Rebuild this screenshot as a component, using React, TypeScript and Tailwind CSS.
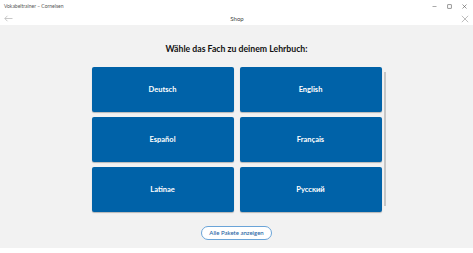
import React from 'react';

const subjects = ['Deutsch', 'English', 'Español', 'Français', 'Latinae', 'Русский'];

const App: React.FC = () => {
	return (
		<div className="w-[473px] h-[253px] bg-white flex flex-col overflow-hidden" style={{ fontFamily: 'Lato, "Noto Sans", sans-serif' }}>
			{/* window title bar */}
			<div className="h-[12px] flex items-center justify-between pl-[4px] pr-[6px]">
				<span className="text-[5px] leading-none text-[#555]">Vokabeltrainer – Cornelsen</span>
				<div className="flex items-center gap-[10px] text-[#555]">
					<svg width="5" height="5" viewBox="0 0 10 10"><path d="M1 5h8" stroke="currentColor" strokeWidth="1" /></svg>
					<svg width="5" height="5" viewBox="0 0 10 10"><rect x="1.5" y="1.5" width="7" height="7" fill="none" stroke="currentColor" strokeWidth="1.2" /></svg>
					<svg width="5" height="5" viewBox="0 0 10 10"><path d="M1 1l8 8M9 1l-8 8" stroke="currentColor" strokeWidth="1.2" /></svg>
				</div>
			</div>
			{/* app header */}
			<div className="h-[13px] flex items-center justify-between px-[4px]">
				<svg width="9" height="7" viewBox="0 0 18 14" className="text-[#aaa]">
					<path d="M17 7H2M7 1.5L1.5 7 7 12.5" fill="none" stroke="currentColor" strokeWidth="1.3" />
				</svg>
				<span className="text-[6px] leading-none text-[#444]">Shop</span>
				<svg width="8" height="8" viewBox="0 0 10 10" className="text-[#999]">
					<path d="M1 1l8 8M9 1l-8 8" stroke="currentColor" strokeWidth="0.8" />
				</svg>
			</div>
			{/* content */}
			<div className="flex-1 bg-[#f2f2f2] flex flex-col items-center">
				<div className="mt-[18px] text-[8.7px] leading-[12px] font-bold text-[#111]">
					Wähle das Fach zu deinem Lehrbuch:
				</div>
				<div className="relative mt-[12px]">
					<div className="grid grid-cols-[142px_142px] auto-rows-[45px] gap-x-[6px] gap-y-[5px]">
						{subjects.map((s) => (
							<button
								key={s}
								className="rounded-[2px] bg-[#0062a8] shadow-[0_1px_1px_rgba(0,0,0,0.25)] flex items-center justify-center text-white text-[7.5px] font-bold"
							>
								{s}
							</button>
						))}
					</div>
					<div className="absolute right-[-4px] top-[5px] w-[2px] h-[134px] bg-[#c6c6c6]" />
				</div>
				<button className="mt-[14px] h-[14px] px-[7px] rounded-full border border-[#6aa4d8] bg-white text-[#1f63a3] text-[6px] font-medium leading-none flex items-center">
					Alle Pakete anzeigen
				</button>
			</div>
			<div className="h-[5px] bg-white" />
		</div>
	);
};

export default App;
